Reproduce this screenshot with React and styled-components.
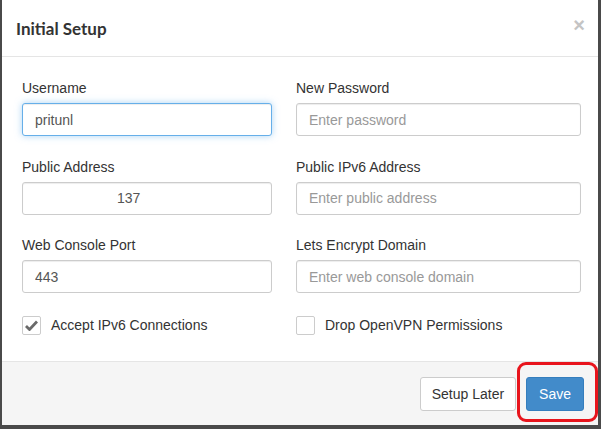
import styled, { createGlobalStyle } from "styled-components";

const Global = createGlobalStyle`
  html, body { margin: 0; padding: 0; }
  body {
    width: 601px;
    height: 429px;
    background: #4a4a4a;
    overflow: hidden;
    font-family: "Liberation Sans", Arial, sans-serif;
  }
`;

const Dialog = styled.div`
  position: relative;
  margin: 0 3px 0 2px;
  height: 425px;
  background: #fff;
  display: flex;
  flex-direction: column;
`;

const Header = styled.div`
  height: 57px;
  border-bottom: 1px solid #e5e5e5;
  display: flex;
  align-items: center;
  justify-content: space-between;
  padding: 0 13px 0 14px;
  box-sizing: border-box;
`;

const Title = styled.h4`
  margin: 0;
  font-family: Lato, "Open Sans", sans-serif;
  font-weight: 700;
  font-size: 17px;
  color: #333;
  padding-top: 1px;
`;

const Close = styled.span`
  font-family: "Liberation Sans", sans-serif;
  font-weight: 700;
  font-size: 20px;
  color: #c4c4c4;
  line-height: 1;
  margin-top: -6px;
`;

const Body = styled.div`
  flex: 1;
  padding: 22px 17px 0 20px;
`;

const Grid = styled.div`
  display: grid;
  grid-template-columns: 250px 285px;
  column-gap: 24px;
  row-gap: 21.5px;
`;

const Group = styled.div`
  display: flex;
  flex-direction: column;
`;

const Label = styled.label`
  font-size: 14px;
  color: #333;
  line-height: 18px;
  margin-bottom: 6px;
`;

const Input = styled.input`
  box-sizing: border-box;
  height: 33px;
  width: 100%;
  border: 1px solid ${(p) => (p.focused ? "#66afe9" : "#ccc")};
  border-radius: 3px;
  box-shadow: ${(p) =>
    p.focused
      ? "inset 0 1px 1px rgba(0,0,0,.075), 0 0 7px rgba(102,175,233,.55)"
      : "inset 0 1px 1px rgba(0,0,0,.075)"};
  padding: 0 0 0 ${(p) => p.indent || 12}px;
  font-family: "Liberation Sans", Arial, sans-serif;
  font-size: 14px;
  color: #555;
  outline: none;
  &::placeholder { color: #999; }
`;

const CheckRow = styled.div`
  display: flex;
  align-items: center;
  gap: 10px;
  margin-top: 1px;
  font-size: 14px;
  color: #333;
`;

const Box = styled.span`
  width: 17px;
  height: 17px;
  border: 1px solid #ccc;
  border-radius: 2px;
  display: flex;
  align-items: center;
  justify-content: center;
  background: #fff;
`;

const Footer = styled.div`
  height: 64px;
  border-top: 1px solid #e5e5e5;
  background: #f5f5f5;
  display: flex;
  align-items: center;
  justify-content: flex-end;
  gap: 10px;
  padding: 0 14px 0 0;
  box-sizing: border-box;
`;

const Button = styled.button`
  height: 34px;
  padding: 0 ${(p) => (p.primary ? 12 : 11)}px;
  border-radius: 3px;
  border: 1px solid ${(p) => (p.primary ? "#357ebd" : "#ccc")};
  background: ${(p) => (p.primary ? "#428bca" : "#fff")};
  color: ${(p) => (p.primary ? "#fff" : "#333")};
  font-family: "Liberation Sans", Arial, sans-serif;
  font-size: 14px;
  margin-top: 1px;
`;

const Marker = styled.div`
  position: absolute;
  left: 515px;
  top: 362px;
  width: 81px;
  height: 60px;
  box-sizing: border-box;
  border: 3px solid #e8141c;
  border-radius: 9px;
  pointer-events: none;
`;

const Check = () => (
  <svg width="13" height="11" viewBox="0 0 13 11">
    <path d="M1 6 L4.5 9.5 L12 1.5" fill="none" stroke="#6a6a6a" strokeWidth="2.8" />
  </svg>
);

export default function App() {
  return (
    <>
      <Global />
      <Dialog>
        <Header>
          <Title>Initial Setup</Title>
          <Close>×</Close>
        </Header>
        <Body>
          <Grid>
            <Group>
              <Label>Username</Label>
              <Input focused defaultValue="pritunl" />
            </Group>
            <Group>
              <Label>New Password</Label>
              <Input placeholder="Enter password" />
            </Group>
            <Group>
              <Label>Public Address</Label>
              <Input indent={94} defaultValue="137" />
            </Group>
            <Group>
              <Label>Public IPv6 Address</Label>
              <Input placeholder="Enter public address" />
            </Group>
            <Group>
              <Label>Web Console Port</Label>
              <Input defaultValue="443" />
            </Group>
            <Group>
              <Label>Lets Encrypt Domain</Label>
              <Input placeholder="Enter web console domain" />
            </Group>
            <CheckRow>
              <Box><Check /></Box>
              Accept IPv6 Connections
            </CheckRow>
            <CheckRow>
              <Box />
              Drop OpenVPN Permissions
            </CheckRow>
          </Grid>
        </Body>
        <Footer>
          <Button>Setup Later</Button>
          <Button primary>Save</Button>
        </Footer>
        <Marker />
      </Dialog>
    </>
  );
}
